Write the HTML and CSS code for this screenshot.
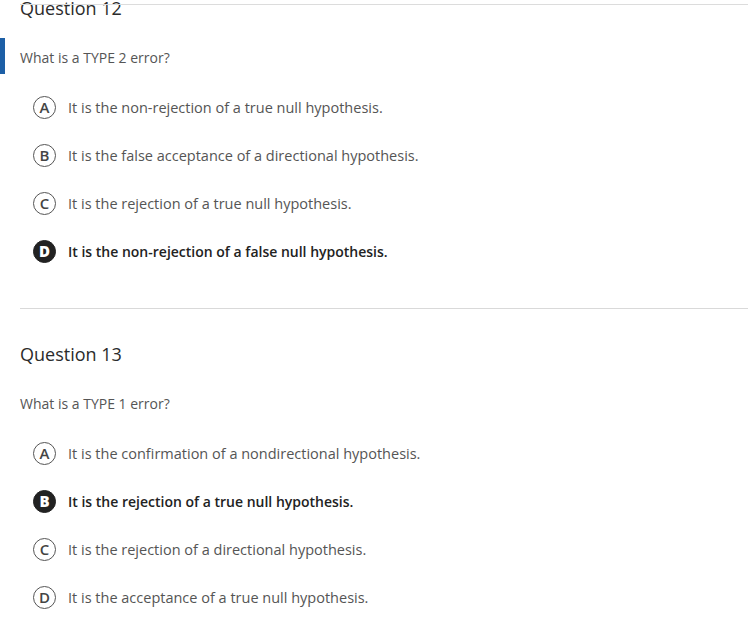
FILE: index.html
```html
<!DOCTYPE html>
<html>
<head>
<meta charset="utf-8">
<link rel="stylesheet" href="styles.css">
</head>
<body>
<div class="topline"></div>
<div class="marker"></div>
<main class="quiz">
  <section class="question first">
    <h2 class="q-title">Question 12</h2>
    <p class="q-text">What is a TYPE 2 error?</p>
    <ul class="options">
      <li class="option"><span class="badge">A</span><span class="label">It is the non-rejection of a true null hypothesis.</span></li>
      <li class="option"><span class="badge">B</span><span class="label">It is the false acceptance of a directional hypothesis.</span></li>
      <li class="option"><span class="badge">C</span><span class="label">It is the rejection of a true null hypothesis.</span></li>
      <li class="option selected"><span class="badge">D</span><span class="label">It is the non-rejection of a false null hypothesis.</span></li>
    </ul>
  </section>
  <section class="question">
    <h2 class="q-title">Question 13</h2>
    <p class="q-text">What is a TYPE 1 error?</p>
    <ul class="options">
      <li class="option"><span class="badge">A</span><span class="label">It is the confirmation of a nondirectional hypothesis.</span></li>
      <li class="option selected"><span class="badge">B</span><span class="label">It is the rejection of a true null hypothesis.</span></li>
      <li class="option"><span class="badge">C</span><span class="label">It is the rejection of a directional hypothesis.</span></li>
      <li class="option"><span class="badge">D</span><span class="label">It is the acceptance of a true null hypothesis.</span></li>
    </ul>
  </section>
</main>
</body>
</html>
```
FILE: styles.css
```css
html, body {
  margin: 0;
  padding: 0;
  background: #fff;
  overflow: hidden;
}
body {
  font-family: "Open Sans", "Liberation Sans", sans-serif;
  color: #555;
  position: relative;
  height: 638px;
}
.topline {
  position: absolute;
  left: 20px;
  right: 0;
  top: 4px;
  height: 1px;
  background: #dcdcdc;
}
.marker {
  position: absolute;
  left: 0;
  top: 38px;
  width: 5px;
  height: 36px;
  background: #1d5fa6;
}
.quiz {
  padding-left: 20px;
  margin-top: -32px;
}
.question {
  border-top: 1px solid #d9d9d9;
  padding-top: 33px;
}
.question.first {
  border-top: none;
  padding-top: 28px;
}
.q-title {
  margin: 0;
  font-size: 18px;
  font-weight: 400;
  color: #2b2b2b;
  line-height: 24px;
}
.q-text {
  margin: 28px 0 0;
  font-size: 14px;
  line-height: 20px;
  color: #555;
}
.options {
  list-style: none;
  margin: 0;
  padding: 15px 0 33px 13px;
}
.option {
  display: flex;
  align-items: center;
  height: 48px;
}
.badge {
  box-sizing: border-box;
  width: 23px;
  height: 23px;
  border-radius: 50%;
  border: 1.8px solid #555;
  display: flex;
  align-items: center;
  justify-content: center;
  font-size: 15px;
  font-weight: 600;
  color: #444;
  margin-right: 12px;
  flex: none;
}
.label {
  font-size: 14.5px;
  color: #555;
}
.selected .badge {
  background: #222;
  border-color: #222;
  color: #fff;
  font-weight: 800;
}
.selected .label {
  font-size: 14px;
  color: #222;
  font-weight: 600;
}
```
